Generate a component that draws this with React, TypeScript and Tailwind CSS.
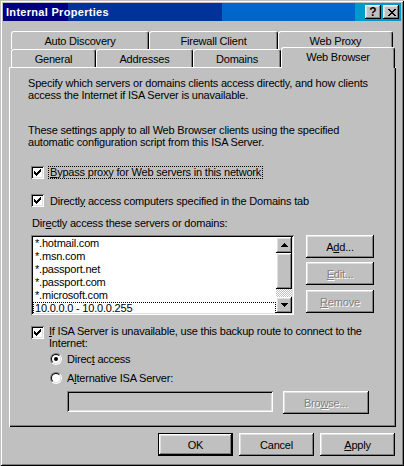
import React from "react";

const RAISED =
  "[box-shadow:inset_-1px_-1px_#000,inset_1px_1px_#fff,inset_-2px_-2px_#808080,inset_2px_2px_#dfdfdf]";
const SUNKEN =
  "[box-shadow:inset_1px_1px_#808080,inset_-1px_-1px_#fff,inset_2px_2px_#000,inset_-2px_-2px_#dfdfdf]";
const DIS = "text-[#808080] [text-shadow:1px_1px_0_#fff]";

function CheckBox() {
  return (
    <div className={`relative w-[13px] h-[13px] shrink-0 bg-white ${SUNKEN}`}>
      <svg width="13" height="13" viewBox="0 0 13 13" className="absolute left-0 top-0" shapeRendering="crispEdges">
        <path
          d="M3 5h1v3H3zM4 6h1v3H4zM5 7h1v3H5zM6 6h1v3H6zM7 5h1v3H7zM8 4h1v3H8zM9 3h1v3H9z"
          fill="#000"
        />
      </svg>
    </div>
  );
}

function Radio({ checked }: { checked?: boolean }) {
  return (
    <div className="w-[12px] h-[12px] shrink-0 rounded-full border border-t-[#808080] border-l-[#808080] border-b-white border-r-white">
      <div className="w-full h-full rounded-full border border-t-black border-l-black border-b-[#dfdfdf] border-r-[#dfdfdf] bg-white flex items-center justify-center">
        {checked && <div className="w-[4px] h-[4px] rounded-full bg-black" />}
      </div>
    </div>
  );
}

function Tab({ label, className }: { label: string; className: string }) {
  return (
    <div
      className={`h-[18px] shrink-0 flex items-center justify-center rounded-t-[3px] border-l border-t border-r border-l-white border-t-white border-r-black [box-shadow:inset_-1px_0_#808080] whitespace-nowrap ${className}`}
    >
      {label}
    </div>
  );
}

function Arrow({ down }: { down?: boolean }) {
  return (
    <div className={`w-[16px] h-[16px] bg-[#c0c0c0] flex items-center justify-center ${RAISED}`}>
      <svg width="7" height="4" viewBox="0 0 7 4" shapeRendering="crispEdges" className={down ? "rotate-180" : ""}>
        <path d="M3 0h1v1H3zM2 1h3v1H2zM1 2h5v1H1zM0 3h7v1H0z" fill="#000" />
      </svg>
    </div>
  );
}

const items = ["*.hotmail.com", "*.msn.com", "*.passport.net", "*.passport.com", "*.microsoft.com"];

export default function App() {
  return (
    <div className="w-[404px] h-[466px] bg-[#c0c0c0] p-[3px] flex flex-col text-black text-[11px] leading-[12px] tracking-[-0.2px] font-['Liberation_Sans',Arial,sans-serif] [box-shadow:inset_1px_1px_#c0c0c0,inset_-1px_-1px_#000,inset_2px_2px_#fff,inset_-2px_-2px_#808080]">
      {/* Title bar */}
      <div className="h-[18px] shrink-0 flex items-center pl-[3px] pr-[2px] [background-image:linear-gradient(to_right,#000080_0,#000080_65px,#003399_65px,#003399_219px,#0066cc_219px,#0066cc_352px,#0099cc_352px)]">
        <div className="flex-1 text-white font-bold tracking-[0.3px] whitespace-nowrap">Internal Properties</div>
        <div className={`w-[16px] h-[14px] bg-[#c0c0c0] flex items-center justify-center font-bold text-[12px] leading-[12px] tracking-normal ${RAISED}`}>
          ?
        </div>
        <div className={`ml-[2px] w-[16px] h-[14px] bg-[#c0c0c0] flex items-center justify-center pl-[1px] ${RAISED}`}>
          <svg width="8" height="7" viewBox="0 0 8 7" shapeRendering="crispEdges">
            <path
              d="M0 0h2v1H0zM6 0h2v1H6zM1 1h2v1H1zM5 1h2v1H5zM2 2h4v1H2zM3 3h2v1H3zM2 4h4v1H2zM1 5h2v1H1zM5 5h2v1H5zM0 6h2v1H0zM6 6h2v1H6z"
              fill="#000"
            />
          </svg>
        </div>
      </div>

      {/* Tabs */}
      <div className="mt-[10px] ml-[8px] flex">
        <Tab label="Auto Discovery" className="w-[138px]" />
        <Tab label="Firewall Client" className="w-[129px]" />
        <Tab label="Web Proxy" className="w-[115px]" />
      </div>
      <div className="ml-[8px] flex h-[18px] items-start">
        <Tab label="General" className="w-[85px]" />
        <Tab label="Addresses" className="w-[97px]" />
        <Tab label="Domains" className="w-[88px]" />
        <div className="relative z-10 -mt-[2px] w-[114px] h-[21px] shrink-0 bg-[#c0c0c0] flex items-center justify-center pb-[2px] rounded-t-[3px] border-l border-t border-r border-l-white border-t-white border-r-black [box-shadow:inset_-1px_0_#808080] whitespace-nowrap">
          Web Browser
        </div>
      </div>

      {/* Panel */}
      <div className="ml-[6px] w-[387px] h-[360px] shrink-0 bg-[#c0c0c0] pl-[22px] pt-[10px] flex flex-col [box-shadow:inset_1px_1px_#fff,inset_-1px_-1px_#000,inset_-2px_-2px_#808080]">
        <p className="-ml-[3px] whitespace-nowrap">
          Specify which servers or domains clients access directly, and how clients
          <br />
          access the Internet if ISA Server is unavailable.
        </p>
        <p className="-ml-[3px] mt-[23px] whitespace-nowrap">
          These settings apply to all Web Browser clients using the specified
          <br />
          automatic configuration script from this ISA Server.
        </p>

        <div className="mt-[18px] h-[13px] flex items-center">
          <CheckBox />
          <span className="ml-[4px] border border-dotted border-black px-[1px] leading-[11px] whitespace-nowrap">
            <span className="underline">B</span>ypass proxy for Web servers in this network
          </span>
        </div>

        <div className="mt-[15px] h-[13px] flex items-center">
          <CheckBox />
          <span className="ml-[6px] whitespace-nowrap">
            Directl<span className="underline">y</span> access computers specified in the Domains tab
          </span>
        </div>

        <div className="mt-[10px] ml-[1px] whitespace-nowrap">
          Dir<span className="underline">e</span>ctly access these servers or domains:
        </div>

        <div className="mt-[6px] flex">
          <div className={`w-[263px] h-[80px] shrink-0 bg-white p-[2px] flex ${SUNKEN}`}>
            <div className="flex-1 overflow-hidden">
              {items.map((t) => (
                <div key={t} className="h-[13px] leading-[13px] pl-[2px] whitespace-nowrap">
                  {t}
                </div>
              ))}
              <div className="h-[13px] leading-[11px] pl-[1px] border border-dotted border-black whitespace-nowrap">
                10.0.0.0 - 10.0.0.255
              </div>
            </div>
            <div className="w-[16px] flex flex-col">
              <Arrow />
              <div className={`h-[36px] bg-[#c0c0c0] ${RAISED}`} />
              <div className="h-[8px] [background-image:repeating-conic-gradient(#fff_0_25%,#c0c0c0_0_50%)] [background-size:2px_2px]" />
              <Arrow down />
            </div>
          </div>
          <div className="ml-[12px] flex flex-col">
            <div className={`w-[68px] h-[23px] flex items-center justify-center ${RAISED}`}>
              <span>
                A<span className="underline">d</span>d...
              </span>
            </div>
            <div className={`mt-[4px] w-[68px] h-[23px] flex items-center justify-center ${RAISED}`}>
              <span className={DIS}>
                <span className="underline">E</span>dit...
              </span>
            </div>
            <div className={`mt-[5px] w-[68px] h-[23px] flex items-center justify-center ${RAISED}`}>
              <span className={DIS}>
                <span className="underline">R</span>emove
              </span>
            </div>
          </div>
        </div>

        <div className="mt-[10px] flex items-start">
          <div className="mt-[1px]">
            <CheckBox />
          </div>
          <span className="ml-[5px] whitespace-nowrap">
            <span className="underline">I</span>f ISA Server is unavailable, use this backup route to connect to the
            <br />
            Internet:
          </span>
        </div>

        <div className="mt-[4px] ml-[19px] h-[12px] flex items-center">
          <Radio checked />
          <span className="ml-[5px] whitespace-nowrap">
            Direc<span className="underline">t</span> access
          </span>
        </div>
        <div className="mt-[7px] ml-[19px] h-[12px] flex items-center">
          <Radio />
          <span className="ml-[5px] whitespace-nowrap">
            A<span className="underline">l</span>ternative ISA Server:
          </span>
        </div>

        <div className="mt-[7px] ml-[36px] flex items-start">
          <div className={`w-[206px] h-[21px] bg-[#c0c0c0] ${SUNKEN}`} />
          <div className={`ml-[10px] w-[86px] h-[23px] flex items-center justify-center ${RAISED}`}>
            <span className={DIS}>
              Bro<span className="underline">w</span>se...
            </span>
          </div>
        </div>
      </div>

      {/* Bottom buttons */}
      <div className="mt-[6px] ml-[6px] w-[387px] pr-[1px] flex justify-end gap-[6px]">
        <div className="w-[75px] h-[23px] border border-black">
          <div className={`w-full h-full flex items-center justify-center ${RAISED}`}>OK</div>
        </div>
        <div className={`w-[75px] h-[23px] flex items-center justify-center ${RAISED}`}>Cancel</div>
        <div className={`w-[75px] h-[23px] flex items-center justify-center ${RAISED}`}>
          <span>
            <span className="underline">A</span>pply
          </span>
        </div>
      </div>
    </div>
  );
}
